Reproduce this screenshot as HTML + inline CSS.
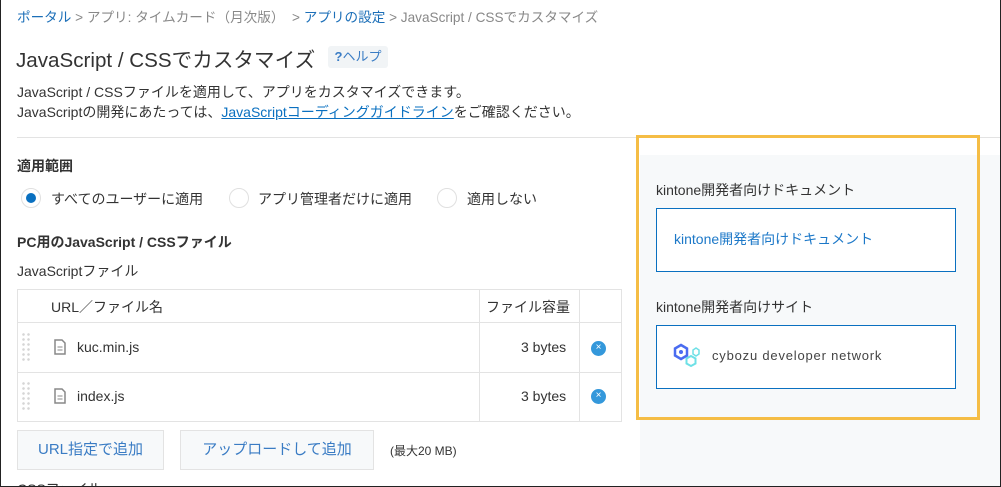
<!DOCTYPE html>
<html><head><meta charset="utf-8"><style>
*{box-sizing:border-box;margin:0;padding:0}
html,body{width:1001px;height:487px;overflow:hidden}
body{background:#fff;font-family:"Liberation Sans","Noto Sans CJK JP",sans-serif;color:#333;position:relative;font-size:14px}
.frame{position:absolute;left:0;top:0;width:1001px;height:487px;border:1px solid #222;border-top:none;pointer-events:none;z-index:10}
.a{position:absolute;white-space:nowrap}
a{color:#0a70c0}
.blue{color:#1c6fb8}
.dots{background:radial-gradient(circle,#d6d6d6 1.1px,transparent 1.5px) 0 0/5px 5px}
</style></head><body>
<div class="frame"></div>
<div class="a" style="left:17px;top:6px;font-size:13.6px;color:#888"><span class="blue">ポータル</span> &gt; アプリ: タイムカード（月次版） &nbsp;&gt; <span class="blue">アプリの設定</span> &gt; JavaScript / CSSでカスタマイズ</div>
<div class="a" style="left:16px;top:43px;font-size:20.6px;color:#333">JavaScript / CSSでカスタマイズ</div>
<div class="a" style="left:328px;top:46px;width:60px;height:22px;background:#f1f4f6;border-radius:3px;font-size:13px;color:#3a7cc4;line-height:22px;text-align:center"><b>?</b>ヘルプ</div>
<div class="a" style="left:17px;top:82px;font-size:14px;line-height:20px">JavaScript / CSSファイルを適用して、アプリをカスタマイズできます。<br>JavaScriptの開発にあたっては、<a style="text-decoration:underline">JavaScriptコーディングガイドライン</a>をご確認ください。</div>
<div class="a" style="left:17px;top:137px;width:984px;height:1px;background:#e3e3e3"></div>
<div class="a" style="left:17px;top:156px;font-size:14px;font-weight:bold">適用範囲</div>
<div class="a" style="left:21px;top:188px;width:20px;height:20px;border-radius:50%;border:1px solid #e0e0e0;background:#fff"><div style="margin:4px;width:10px;height:10px;border-radius:50%;background:#0a70c0"></div></div>
<div class="a" style="left:51px;top:189px">すべてのユーザーに適用</div>
<div class="a" style="left:229px;top:188px;width:20px;height:20px;border-radius:50%;border:1px solid #e0e0e0"></div>
<div class="a" style="left:258px;top:189px">アプリ管理者だけに適用</div>
<div class="a" style="left:437px;top:188px;width:20px;height:20px;border-radius:50%;border:1px solid #e0e0e0"></div>
<div class="a" style="left:467px;top:189px">適用しない</div>
<div class="a" style="left:17px;top:232px;font-weight:bold">PC用のJavaScript / CSSファイル</div>
<div class="a" style="left:17px;top:261px">JavaScriptファイル</div>
<div class="a" style="left:17px;top:289px;width:605px;height:133px;border:1px solid #e3e3e3"></div>
<div class="a" style="left:17px;top:322px;width:605px;height:1px;background:#e3e3e3"></div>
<div class="a" style="left:17px;top:372px;width:605px;height:1px;background:#e3e3e3"></div>
<div class="a" style="left:479px;top:289px;width:1px;height:133px;background:#e3e3e3"></div>
<div class="a" style="left:579px;top:289px;width:1px;height:133px;background:#e3e3e3"></div>
<div class="a" style="left:51px;top:297px">URL／ファイル名</div>
<div class="a" style="left:486px;top:297px">ファイル容量</div>
<div class="a dots" style="left:21px;top:332px;width:10px;height:30px"></div>
<div class="a dots" style="left:21px;top:381px;width:10px;height:30px"></div>
<svg class="a" style="left:54px;top:339px" width="12" height="16"><path d="M1 1h7l3 3v11H1z" fill="none" stroke="#888" stroke-width="1.5"/><path d="M3.5 8h5M3.5 11h5" stroke="#888"/></svg>
<svg class="a" style="left:54px;top:388px" width="12" height="16"><path d="M1 1h7l3 3v11H1z" fill="none" stroke="#888" stroke-width="1.5"/><path d="M3.5 8h5M3.5 11h5" stroke="#888"/></svg>
<div class="a" style="left:77px;top:339px">kuc.min.js</div>
<div class="a" style="left:77px;top:388px">index.js</div>
<div class="a" style="left:521px;top:339px">3 bytes</div>
<div class="a" style="left:521px;top:388px">3 bytes</div>
<div class="a" style="left:591px;top:341px;width:15px;height:15px;border-radius:50%;background:#3498db;color:#fff;font-size:10px;line-height:14px;text-align:center">×</div>
<div class="a" style="left:591px;top:389px;width:15px;height:15px;border-radius:50%;background:#3498db;color:#fff;font-size:10px;line-height:14px;text-align:center">×</div>
<div class="a" style="left:17px;top:430px;width:147px;height:40px;border:1px solid #e3e3e3;background:#f7f9fa;color:#3a7cc4;font-size:15px;line-height:38px;text-align:center">URL指定で追加</div>
<div class="a" style="left:180px;top:430px;width:194px;height:40px;border:1px solid #e3e3e3;background:#f7f9fa;color:#3a7cc4;font-size:15px;line-height:38px;text-align:center">アップロードして追加</div>
<div class="a" style="left:390px;top:442px;font-size:12px">(最大20 MB)</div>
<div class="a" style="left:17px;top:479px;font-size:14px">CSSファイル</div>
<div class="a" style="left:640px;top:155px;width:361px;height:332px;background:#f7f9fa"></div>
<div class="a" style="left:636px;top:135px;width:344px;height:285px;border:3px solid #f5bd45"></div>
<div class="a" style="left:656px;top:180px">kintone開発者向けドキュメント</div>
<div class="a" style="left:656px;top:208px;width:300px;height:64px;border:1px solid #0a70c0;background:#fff;color:#1c78c8;line-height:60px;padding-left:17px">kintone開発者向けドキュメント</div>
<div class="a" style="left:656px;top:297px">kintone開発者向けサイト</div>
<div class="a" style="left:656px;top:325px;width:300px;height:64px;border:1px solid #0a70c0;background:#fff"></div>
<svg class="a" style="left:672px;top:343px" width="32" height="28"><polygon points="9,2 15,5.5 15,12.5 9,16 3,12.5 3,5.5" fill="none" stroke="#4a6cf0" stroke-width="2.5"/><circle cx="9" cy="9" r="2" fill="#4a6cf0"/><polygon points="19,13 23.5,15.5 23.5,20.5 19,23 14.5,20.5 14.5,15.5" fill="none" stroke="#6ee0e6" stroke-width="2"/><polygon points="24,5 27,7 27,11 24,13 21,11 21,7" fill="none" stroke="#6ee0e6" stroke-width="1.5"/></svg>
<div class="a" style="left:712px;top:348px;font-size:13px;color:#444;letter-spacing:0.8px">cybozu developer network</div>
</body></html>
